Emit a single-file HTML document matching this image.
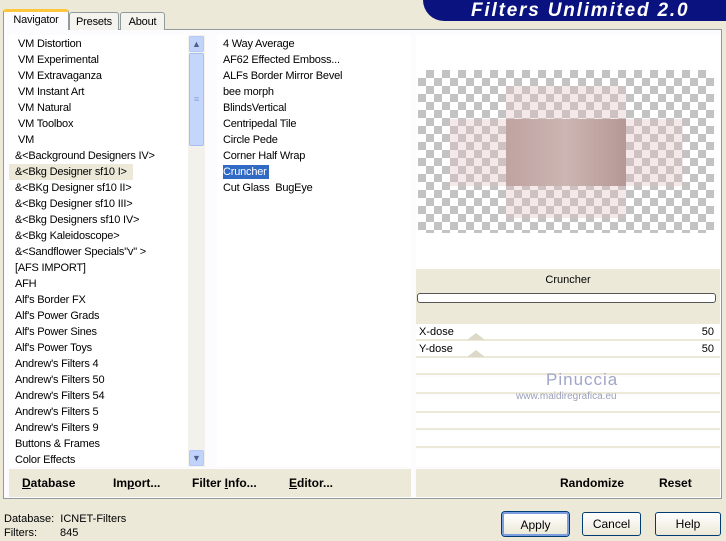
<!DOCTYPE html>
<html><head><style>
*{margin:0;padding:0;box-sizing:border-box}
body{width:726px;height:541px;background:#ece9d8;font-family:"Liberation Sans",sans-serif;font-size:11px;color:#000;position:relative;overflow:hidden}
.a{position:absolute}
.banner{left:423px;top:0;width:303px;height:21px;background:#0a1280;border-bottom-left-radius:22px}
.banner span{position:absolute;left:48px;top:0;color:#fff;font-weight:bold;font-style:italic;font-size:19px;letter-spacing:1.8px}
.tab{top:12px;height:18px;border:1px solid #919b9c;border-bottom:none;background:#f4f3ee;text-align:center;line-height:18px;border-radius:3px 3px 0 0;letter-spacing:-.2px}
.panel{left:3px;top:29px;width:719px;height:470px;border:1px solid #919b9c;background:#fcfcfe}
.list{background:#fff;letter-spacing:-.2px}
.list div{height:16px;line-height:16px;white-space:nowrap}
.bar{top:469px;height:28px;background:#ece9d8}
.bar b{position:absolute;top:7px;font-size:12px}
.btn{top:512px;height:24px;border:1px solid #003c74;border-radius:3px;background:linear-gradient(#fff,#ece9d8);text-align:center;line-height:22px;font-size:12px}
.row{left:416px;width:304px;height:17px;background:#fff;border-bottom:2px solid #ece9d8}
</style></head><body>
<div class="a banner"><span>Filters Unlimited 2.0</span></div>
<div class="a panel"></div>
<div class="a tab" style="left:69px;width:50px">Presets</div>
<div class="a tab" style="left:120px;width:45px">About</div>
<div class="a tab" style="left:3px;top:9px;width:66px;height:21px;background:#fcfcfe;border-top:3px solid #ffc83c;line-height:17px">Navigator</div>

<div class="a list" style="left:9px;top:35px;width:180px;height:432px;padding-top:1px">
<div style="padding-left:9px">VM Distortion</div><div style="padding-left:9px">VM Experimental</div><div style="padding-left:9px">VM Extravaganza</div><div style="padding-left:9px">VM Instant Art</div><div style="padding-left:9px">VM Natural</div><div style="padding-left:9px">VM Toolbox</div><div style="padding-left:9px">VM</div>
<div style="padding-left:6px">&amp;&lt;Background Designers IV&gt;</div>
<div style="padding-left:6px;background:#ece9d8;width:124px">&amp;&lt;Bkg Designer sf10 I&gt;</div>
<div style="padding-left:6px">&amp;&lt;BKg Designer sf10 II&gt;</div><div style="padding-left:6px">&amp;&lt;Bkg Designer sf10 III&gt;</div><div style="padding-left:6px">&amp;&lt;Bkg Designers sf10 IV&gt;</div><div style="padding-left:6px">&amp;&lt;Bkg Kaleidoscope&gt;</div><div style="padding-left:6px">&amp;&lt;Sandflower Specials"v" &gt;</div><div style="padding-left:6px">[AFS IMPORT]</div><div style="padding-left:6px">AFH</div><div style="padding-left:6px">Alf's Border FX</div><div style="padding-left:6px">Alf's Power Grads</div><div style="padding-left:6px">Alf's Power Sines</div><div style="padding-left:6px">Alf's Power Toys</div><div style="padding-left:6px">Andrew's Filters 4</div><div style="padding-left:6px">Andrew's Filters 50</div><div style="padding-left:6px">Andrew's Filters 54</div><div style="padding-left:6px">Andrew's Filters 5</div><div style="padding-left:6px">Andrew's Filters 9</div><div style="padding-left:6px">Buttons &amp; Frames</div><div style="padding-left:6px">Color Effects</div>
</div>
<div class="a" style="left:188px;top:35px;width:17px;height:432px;background:#f3f1ec"></div>
<div class="a" style="left:189px;top:36px;width:15px;height:16px;background:#c1d3fb;border:1px solid #b6c8f5;border-radius:2px;color:#4d6185;font-size:9px;text-align:center;line-height:14px">&#9650;</div>
<div class="a" style="left:189px;top:53px;width:15px;height:93px;background:#c5d6fc;border:1px solid #a9bdf3;border-radius:2px;color:#8ca2d8;text-align:center;line-height:90px;font-size:9px">&#8801;</div>
<div class="a" style="left:189px;top:450px;width:15px;height:16px;background:#c1d3fb;border:1px solid #b6c8f5;border-radius:2px;color:#4d6185;font-size:9px;text-align:center;line-height:14px">&#9660;</div>

<div class="a list" style="left:217px;top:35px;width:194px;height:432px;padding-top:1px;padding-left:6px">
<div>4 Way Average</div><div>AF62 Effected Emboss...</div><div>ALFs Border Mirror Bevel</div><div>bee morph</div><div>BlindsVertical</div><div>Centripedal Tile</div><div>Circle Pede</div><div>Corner Half Wrap</div>
<div><span style="background:#316ac5;color:#fff;padding:1px 2px 1px 0">Cruncher</span></div><div>Cut Glass&nbsp; BugEye</div>
</div>

<div class="a" style="left:416px;top:35px;width:304px;height:234px;background:#fff"></div>
<div class="a" style="left:418px;top:70px;width:296px;height:163px;background-color:#fff;background-image:linear-gradient(45deg,#c3c3c3 25%,transparent 25%,transparent 75%,#c3c3c3 75%),linear-gradient(45deg,#c3c3c3 25%,transparent 25%,transparent 75%,#c3c3c3 75%);background-size:16px 16px;background-position:0 0,8px 8px"></div>
<div class="a" style="left:506px;top:86px;width:120px;height:132px;background:rgba(225,190,190,.35)"></div>
<div class="a" style="left:450px;top:119px;width:233px;height:67px;background:rgba(225,190,190,.35)"></div>
<div class="a" style="left:506px;top:119px;width:120px;height:67px;background:linear-gradient(90deg,#bfa3a1,#ccb5b2 50%,#b59896)"></div>

<div class="a" style="left:416px;top:269px;width:304px;height:55px;background:#ece9d8"></div>
<div class="a" style="left:416px;top:274px;width:304px;text-align:center;font-size:11px">Cruncher</div>
<div class="a" style="left:417px;top:293px;width:299px;height:10px;background:#fff;border:1px solid #555;border-radius:3px"></div>
<div class="a row" style="top:324px"><span class="a" style="left:3px;top:2px">X-dose</span><span class="a" style="right:6px;top:2px">50</span></div>
<div class="a row" style="top:341px"><span class="a" style="left:3px;top:2px">Y-dose</span><span class="a" style="right:6px;top:2px">50</span></div>
<div class="a" style="left:467px;top:333px;width:0;height:0;border-left:9px solid transparent;border-right:9px solid transparent;border-bottom:7px solid #ddd9c8"></div>
<div class="a" style="left:467px;top:350px;width:0;height:0;border-left:9px solid transparent;border-right:9px solid transparent;border-bottom:7px solid #ddd9c8"></div>
<div class="a row" style="top:358px"></div><div class="a row" style="top:377px"></div><div class="a row" style="top:396px"></div><div class="a row" style="top:413px"></div><div class="a row" style="top:431px"></div><div class="a row" style="top:449px;height:18px;border:none"></div>
<div class="a" style="left:546px;top:370px;font-size:17px;color:#a0a6c8;letter-spacing:1px">Pinuccia</div>
<div class="a" style="left:516px;top:391px;font-size:10px;color:#9a9fbb">www.maidiregrafica.eu</div>

<div class="a bar" style="left:9px;width:402px"><b style="left:13px"><u>D</u>atabase</b><b style="left:104px">Im<u>p</u>ort...</b><b style="left:183px">Filter <u>I</u>nfo...</b><b style="left:280px"><u>E</u>ditor...</b></div>
<div class="a bar" style="left:416px;width:304px"><b style="left:144px">Randomize</b><b style="left:243px">Reset</b></div>

<div class="a" style="left:4px;top:512px;line-height:14px">Database:&nbsp; ICNET-Filters<br>Filters:<span style="position:absolute;left:56px">845</span></div>
<div class="a btn" style="left:502px;width:67px;border:2px solid #7a9ee0;box-shadow:0 0 0 1px #003c74">Apply</div>
<div class="a btn" style="left:582px;width:59px">Cancel</div>
<div class="a btn" style="left:655px;width:66px">Help</div>
</body></html>
